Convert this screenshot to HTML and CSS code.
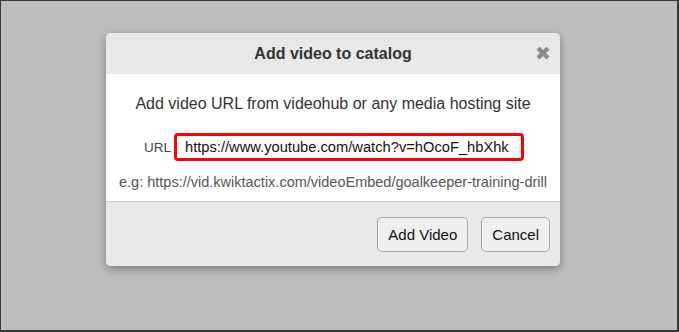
FILE: index.html
```html
<!DOCTYPE html>
<html>
<head>
<meta charset="utf-8">
<link rel="stylesheet" href="styles.css">
</head>
<body>
<div class="page">
  <div class="dialog">
    <div class="header">
      <span class="title">Add video to catalog</span>
      <span class="close">&#x2716;</span>
    </div>
    <div class="content">
      <p class="lead">Add video URL from videohub or any media hosting site</p>
      <div class="row">
        <label class="label">URL</label>
        <div class="input">https://www.youtube.com/watch?v=hOcoF_hbXhk</div>
      </div>
      <p class="hint">e.g: https://vid.kwiktactix.com/videoEmbed/goalkeeper-training-drill</p>
    </div>
    <div class="footer">
      <button class="btn">Add Video</button>
      <button class="btn">Cancel</button>
    </div>
  </div>
</div>
</body>
</html>
```

FILE: styles.css
```css
html, body {
  margin: 0;
  padding: 0;
}
body {
  width: 679px;
  height: 332px;
  font-family: "Liberation Sans", Arial, sans-serif;
  overflow: hidden;
}
.page {
  box-sizing: border-box;
  width: 679px;
  height: 332px;
  background: #bdbdbd;
  border: 1px solid #3a3a3a;
  border-right-width: 2px;
  border-bottom-width: 2px;
  padding: 32px 0 0 105px;
}
.dialog {
  width: 454px;
  height: 233px;
  background: #fff;
  border-radius: 5px;
  box-shadow: 0 3px 9px rgba(0, 0, 0, 0.35);
  display: flex;
  flex-direction: column;
  overflow: hidden;
}
.header {
  position: relative;
  height: 41px;
  background: #e8e8e8;
  display: flex;
  align-items: center;
  justify-content: center;
}
.title {
  font-size: 16px;
  font-weight: bold;
  color: #333;
}
.close {
  position: absolute;
  right: 9px;
  top: 10px;
  font-size: 19px;
  line-height: 20px;
  color: #8a8a8a;
  font-family: "DejaVu Sans", sans-serif;
  font-weight: bold;
}
.content {
  height: 127px;
  border-bottom: 1px solid #d0d0d0;
  display: flex;
  flex-direction: column;
  align-items: center;
}
.lead {
  margin: 20px 0 0 0;
  font-size: 16px;
  color: #333;
  line-height: 19px;
}
.row {
  margin-top: 20px;
  display: flex;
  align-items: center;
  margin-left: 2px;
}
.label {
  font-size: 13.5px;
  color: #444;
  margin-right: 3px;
}
.input {
  box-sizing: border-box;
  width: 350px;
  height: 28px;
  border: 3px solid #ff0000;
  border-radius: 4px;
  padding: 0 0 0 8px;
  font-size: 14.7px;
  line-height: 22px;
  color: #111;
  white-space: nowrap;
  overflow: hidden;
}
.hint {
  margin: 13px 0 0 0;
  font-size: 14.5px;
  color: #555;
}
.footer {
  flex: 1;
  background: #e8e8e8;
  display: flex;
  justify-content: flex-end;
  align-items: center;
  gap: 13px;
  padding-right: 10px;
}
.btn {
  height: 35px;
  padding: 0 10px;
  font-family: "Liberation Sans", Arial, sans-serif;
  font-size: 15px;
  color: #111;
  background: #efefef;
  border: 1px solid #a8a8a8;
  border-radius: 5px;
  margin-top: 1px;
}
```
